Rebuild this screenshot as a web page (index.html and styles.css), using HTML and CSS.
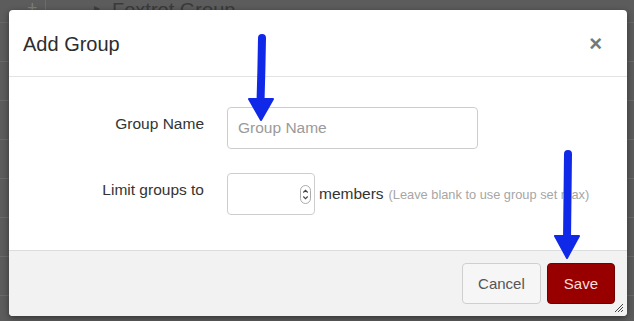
FILE: index.html
```html
<!DOCTYPE html>
<html lang="en">
<head>
<meta charset="UTF-8" />
<meta name="viewport" content="width=device-width, initial-scale=1.0">
<title>Add Group</title>
<link rel="stylesheet" href="styles.css">
</head>
<body>

<div class="page">
  <div class="group-row">
    <span class="plus">+</span>
    <span class="caret">&#9656;</span>
    <span class="group-title">Foxtrot Group</span>
  </div>
  <div class="row"></div>
  <div class="row"></div>
  <div class="row"></div>
  <div class="row"></div>
  <div class="row"></div>
  <div class="row"></div>
  <div class="row"></div>
</div>

<div class="dialog">
  <div class="dialog-header">
    <h2>Add Group</h2>
    <span class="close">&times;</span>
  </div>

  <form class="dialog-body">
    <label class="label" for="groupName">Group Name</label>
    <input class="text-field" type="text" id="groupName" placeholder="Group Name">

    <label class="label" for="limit">Limit groups to</label>
    <div class="limit-line">
      <div class="number-field">
        <input type="text" id="limit">
        <span class="spinner">
          <svg width="11" height="19" viewBox="0 0 11 19">
            <rect x="0.5" y="0.5" width="10" height="18" rx="5" fill="#fff" stroke="#aaa"/>
            <path d="M3.3 7.5 L5.5 5.3 L7.7 7.5" fill="none" stroke="#444" stroke-width="1.1"/>
            <path d="M3.3 11.5 L5.5 13.7 L7.7 11.5" fill="none" stroke="#444" stroke-width="1.1"/>
          </svg>
        </span>
      </div>
      <span class="members">members</span>
      <span class="hint">(Leave blank to use group set max)</span>
    </div>
  </form>

  <div class="dialog-footer">
    <button class="btn">Cancel</button>
    <button class="btn btn-primary">Save</button>
    <svg class="resize" width="10" height="10" viewBox="0 0 10 10">
      <path d="M1 9 L9 1 M4 9 L9 4 M7 9 L9 7" stroke="#444" stroke-width="1"/>
    </svg>
  </div>
</div>

<!-- annotation arrows drawn over the screenshot -->
<svg class="arrows" width="634" height="321" viewBox="0 0 634 321">
  <path d="M262 38 Q261.5 70 260.5 102" fill="none" stroke="#1029e8" stroke-width="8" stroke-linecap="round"/>
  <path d="M249 99 L273 99 L261 120 Z" fill="#1029e8" stroke="#1029e8" stroke-width="2" stroke-linejoin="round"/>
  <path d="M568 154 Q567.5 200 567 240" fill="none" stroke="#1029e8" stroke-width="8" stroke-linecap="round"/>
  <path d="M555 236 L579 236 L567 258 Z" fill="#1029e8" stroke="#1029e8" stroke-width="2" stroke-linejoin="round"/>
</svg>

</body>
</html>
```

FILE: styles.css
```css
body {
  margin: 0;
  padding: 0;
  background: #5c5c5c;
  font-family: 'Liberation Sans', Arial, sans-serif;
  color: #333;
  width: 634px;
  height: 321px;
  overflow: hidden;
  position: relative;
}
.page {
  height: 321px;
}
.group-row {
  height: 22px;
  border-bottom: 1px solid #686868;
  display: flex;
  align-items: flex-start;
  position: relative;
}
.group-row .plus {
  color: #7c7c7c;
  font-size: 18px;
  line-height: 16px;
  width: 46px;
  padding-left: 27px;
  box-sizing: border-box;
  border-right: 1px solid #6c6c6c;
  height: 22px;
}
.group-row .caret {
  color: #3e3e3e;
  font-size: 12px;
  line-height: 16px;
  margin-left: 48px;
}
.group-row .group-title {
  color: #3a3a3a;
  font-size: 20px;
  line-height: 18px;
  margin-left: 12px;
  margin-top: 1px;
}
.row {
  height: 38px;
  border-bottom: 1px solid #6a6a6a;
}
.dialog {
  position: absolute;
  left: 9px;
  top: 10px;
  width: 618px;
  height: 306px;
  background: #fff;
  border-radius: 4px;
  box-shadow: 0 2px 6px rgba(0,0,0,0.45);
  display: flex;
  flex-direction: column;
  overflow: hidden;
}
.dialog-header {
  height: 67px;
  border-bottom: 1px solid #e3e3e3;
  display: flex;
  align-items: center;
  justify-content: space-between;
  padding: 2px 25px 0 14px;
  box-sizing: border-box;
}
.dialog-header h2 {
  margin: 0;
  font-size: 20px;
  font-weight: normal;
  color: #2d2d2d;
}
.close {
  font-size: 22px;
  font-weight: bold;
  color: #777;
  line-height: 20px;
}
.dialog-body {
  flex: 1;
  margin: 0;
  padding-top: 30px;
  display: grid;
  grid-template-columns: 195px auto;
  column-gap: 23px;
  row-gap: 24px;
  align-content: start;
}
.label {
  text-align: right;
  font-size: 15.5px;
  line-height: 20px;
  padding-top: 7px;
  color: #333;
}
.text-field {
  width: 251px;
  height: 42px;
  box-sizing: border-box;
  border: 1px solid #cdcdcd;
  border-radius: 4px;
  padding: 0 10px;
  font-family: inherit;
  font-size: 15.5px;
  color: #333;
}
.text-field::placeholder {
  color: #9a9a9a;
}
.limit-line {
  display: flex;
  align-items: center;
}
.number-field {
  width: 88px;
  height: 42px;
  box-sizing: border-box;
  border: 1px solid #cdcdcd;
  border-radius: 4px;
  display: flex;
  align-items: center;
  padding-right: 3px;
}
.number-field input {
  border: none;
  outline: none;
  width: 60px;
  margin-left: 6px;
  font-size: 15px;
  flex: 1;
}
.spinner svg {
  display: block;
}
.members {
  font-size: 15.5px;
  margin-left: 4px;
  color: #333;
}
.hint {
  font-size: 12.8px;
  color: #a6a6a6;
  margin-left: 5px;
  margin-top: 1px;
}
.dialog-footer {
  height: 66px;
  background: #f2f2f2;
  border-top: 1px solid #dcdcdc;
  box-sizing: border-box;
  display: flex;
  justify-content: flex-end;
  align-items: flex-start;
  padding: 12px 12px 0 0;
  gap: 6px;
  position: relative;
}
.btn {
  height: 41px;
  padding: 0 15px;
  font-family: inherit;
  font-size: 15px;
  border-radius: 4px;
  border: 1px solid #cfcfcf;
  background: #f6f6f6;
  color: #555;
  cursor: pointer;
}
.btn-primary {
  background: #980000;
  border-color: #730000;
  color: #f8dede;
  padding: 0 16px;
}
.resize {
  position: absolute;
  right: 3px;
  bottom: 3px;
}
.arrows {
  position: absolute;
  left: 0;
  top: 0;
  pointer-events: none;
}
```
